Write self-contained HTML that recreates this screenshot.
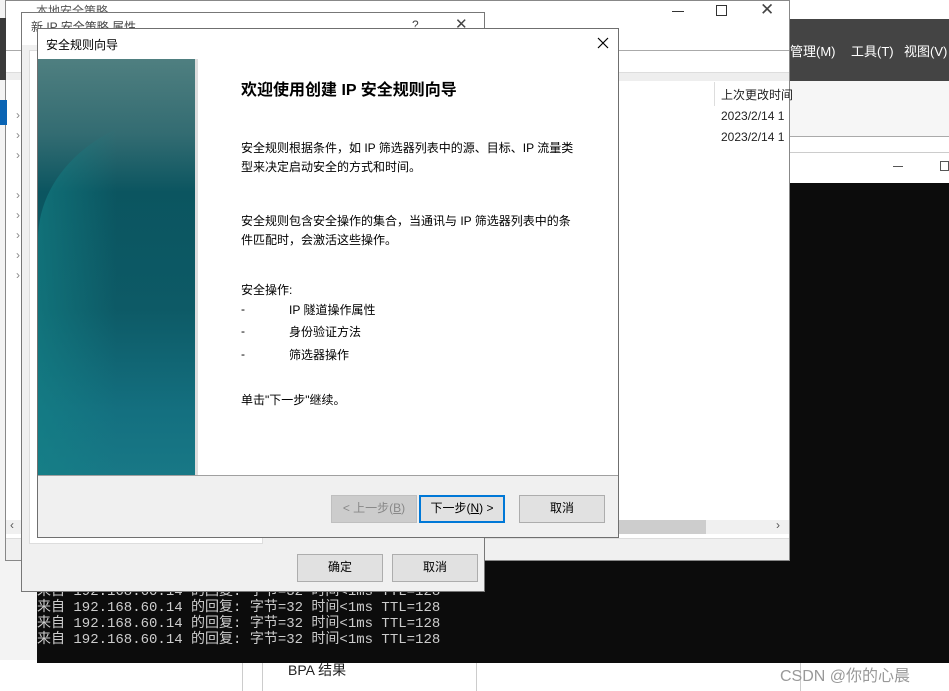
<!DOCTYPE html>
<html><head><meta charset="utf-8"><style>
*{margin:0;padding:0;box-sizing:border-box}
body{width:949px;height:691px;overflow:hidden;background:#f3f3f3;position:relative;font-family:"Liberation Sans","Noto Sans CJK SC",sans-serif;font-size:12px;color:#000}
.a{position:absolute}
.t{position:absolute;white-space:nowrap}
.btn{position:absolute;background:#e1e1e1;border:1px solid #adadad;text-align:center;font-size:12px;line-height:25px}
.con{font-family:"Liberation Mono","Noto Sans CJK SC",monospace;font-size:14px;color:#cccccc;line-height:16px}
</style></head><body>
<div class="a" style="left:0;top:660px;width:949px;height:31px;background:#fff"></div>
<div class="a" style="left:242px;top:660px;width:1px;height:31px;background:#ccc"></div>
<div class="a" style="left:262px;top:660px;width:1px;height:31px;background:#ccc"></div>
<div class="a" style="left:476px;top:660px;width:1px;height:31px;background:#ccc"></div>
<div class="a" style="left:800px;top:660px;width:1px;height:31px;background:#ccc"></div>
<div class="t" style="left:288px;top:660px;font-size:14px;color:#222">BPA 结果</div>
<div class="t" style="left:780px;top:662px;font-size:16px;color:#999">CSDN @你的心晨</div>

<div class="a" style="left:790px;top:0;width:159px;height:185px;background:#fff"></div>
<div class="a" style="left:790px;top:19px;width:159px;height:62px;background:#444"></div>
<div class="t" style="left:790px;top:41px;color:#fff;font-size:13px">管理(M)</div>
<div class="t" style="left:851px;top:41px;color:#fff;font-size:13px">工具(T)</div>
<div class="t" style="left:904px;top:41px;color:#fff;font-size:13px">视图(V)</div>
<div class="a" style="left:790px;top:81px;width:159px;height:56px;background:#f6f6f6;border-bottom:1px solid #aaa"></div>
<div class="a" style="left:790px;top:152px;width:159px;height:31px;background:#fff;border-top:1px solid #ccc"></div>
<div class="a" style="left:893px;top:166px;width:10px;height:1px;background:#555"></div>
<div class="a" style="left:940px;top:161px;width:9px;height:10px;border:1px solid #555"></div>

<div class="a" style="left:37px;top:183px;width:912px;height:480px;background:#0c0c0c"></div>
<div class="t con" style="left:37px;top:584px">来自 192.168.60.14 的回复: 字节=32 时间&lt;1ms TTL=128</div>
<div class="t con" style="left:37px;top:600px">来自 192.168.60.14 的回复: 字节=32 时间&lt;1ms TTL=128</div>
<div class="t con" style="left:37px;top:616px">来自 192.168.60.14 的回复: 字节=32 时间&lt;1ms TTL=128</div>
<div class="t con" style="left:37px;top:632px">来自 192.168.60.14 的回复: 字节=32 时间&lt;1ms TTL=128</div>

<div class="a" style="left:5px;top:0;width:785px;height:561px;background:#fff;border:1px solid #888"></div>
<div class="a" style="left:0;top:18px;width:6px;height:62px;background:#3a3a3a"></div>
<div class="t" style="left:36px;top:2px;color:#555;font-size:12px">本地安全策略</div>
<div class="a" style="left:672px;top:11px;width:12px;height:1px;background:#333"></div>
<div class="a" style="left:716px;top:5px;width:11px;height:11px;border:1px solid #333"></div>
<div class="t" style="left:760px;top:0px;font-size:17px;color:#444">✕</div>
<div class="a" style="left:6px;top:50px;width:783px;height:1px;background:#aaa"></div>
<div class="a" style="left:6px;top:72px;width:783px;height:1px;background:#ddd"></div>
<div class="a" style="left:6px;top:73px;width:783px;height:8px;background:#eee"></div>
<div class="a" style="left:6px;top:80px;width:16px;height:446px;background:#fff;border-right:1px solid #ddd"></div>
<div class="a" style="left:0;top:100px;width:7px;height:25px;background:#0a64b4"></div>
<div class="t" style="left:16px;top:108px;color:#888">›</div>
<div class="t" style="left:16px;top:128px;color:#888">›</div>
<div class="t" style="left:16px;top:148px;color:#888">›</div>
<div class="t" style="left:16px;top:188px;color:#888">›</div>
<div class="t" style="left:16px;top:208px;color:#888">›</div>
<div class="t" style="left:16px;top:228px;color:#888">›</div>
<div class="t" style="left:16px;top:248px;color:#888">›</div>
<div class="t" style="left:16px;top:268px;color:#888">›</div>
<div class="a" style="left:714px;top:82px;width:1px;height:24px;background:#ddd"></div>
<div class="t" style="left:721px;top:86px;color:#222">上次更改时间</div>
<div class="t" style="left:721px;top:109px;color:#222">2023/2/14 1</div>
<div class="t" style="left:721px;top:130px;color:#222">2023/2/14 1</div>
<div class="a" style="left:6px;top:520px;width:783px;height:14px;background:#f0f0f0"></div>
<div class="a" style="left:618px;top:520px;width:88px;height:14px;background:#cdcdcd"></div>
<div class="t" style="left:10px;top:518px;color:#555">‹</div>
<div class="t" style="left:776px;top:518px;color:#555">›</div>
<div class="a" style="left:6px;top:538px;width:783px;height:22px;background:#f0f0f0;border-top:1px solid #ddd"></div>

<div class="a" style="left:21px;top:12px;width:464px;height:580px;background:#f0f0f0;border:1px solid #777"></div>
<div class="a" style="left:22px;top:13px;width:462px;height:32px;background:#fff"></div>
<div class="t" style="left:31px;top:18px;color:#444">新 IP 安全策略 属性</div>
<div class="t" style="left:412px;top:18px;color:#444">?</div>
<div class="t" style="left:455px;top:15px;color:#444;font-size:15px">✕</div>
<div class="a" style="left:29px;top:50px;width:234px;height:494px;background:#fff;border:1px solid #ddd"></div>
<div class="btn" style="left:297px;top:554px;width:86px;height:28px">确定</div>
<div class="btn" style="left:392px;top:554px;width:86px;height:28px">取消</div>

<div class="a" style="left:37px;top:28px;width:582px;height:510px;background:#fff;border:1px solid #6f6f6f"></div>
<div class="t" style="left:46px;top:36px;font-size:12px">安全规则向导</div>
<svg class="a" style="left:597px;top:37px" width="12" height="12"><path d="M1 1L11 11M11 1L1 11" stroke="#000" stroke-width="1.2"/></svg>
<div class="a" style="left:38px;top:59px;width:157px;height:416px;background:linear-gradient(180deg,#4f7f80 0%,#336c72 18%,#0b5560 32%,#0d5a66 60%,#147080 85%,#187886 100%)"></div>
<div class="a" style="left:38px;top:112px;width:157px;height:363px;border-radius:100% 0 0 0/35% 0 0 0;background:linear-gradient(90deg,rgba(20,130,135,.6),rgba(0,0,0,0) 50%)"></div>
<div class="a" style="left:195px;top:59px;width:3px;height:416px;background:#ddd"></div>
<div class="t" style="left:241px;top:76px;font-size:16px;font-weight:bold">欢迎使用创建 IP 安全规则向导</div>
<div class="t" style="left:241px;top:139px;line-height:19px">安全规则根据条件，如 IP 筛选器列表中的源、目标、IP 流量类<br>型来决定启动安全的方式和时间。</div>
<div class="t" style="left:241px;top:212px;line-height:19px">安全规则包含安全操作的集合，当通讯与 IP 筛选器列表中的条<br>件匹配时，会激活这些操作。</div>
<div class="t" style="left:241px;top:281px">安全操作:</div>
<div class="t" style="left:241px;top:302px">-</div><div class="t" style="left:289px;top:301px">IP 隧道操作属性</div>
<div class="t" style="left:241px;top:324px">-</div><div class="t" style="left:289px;top:323px">身份验证方法</div>
<div class="t" style="left:241px;top:347px">-</div><div class="t" style="left:289px;top:346px">筛选器操作</div>
<div class="t" style="left:241px;top:391px">单击"下一步"继续。</div>
<div class="a" style="left:38px;top:475px;width:580px;height:62px;background:#f0f0f0;border-top:1px solid #a0a0a0"></div>
<div class="btn" style="left:331px;top:495px;width:86px;height:28px;background:#ccc;border-color:#bfbfbf;color:#888">&lt; 上一步(<u>B</u>)</div>
<div class="btn" style="left:419px;top:495px;width:86px;height:28px;border:2px solid #0078d7;line-height:23px">下一步(<u>N</u>) &gt;</div>
<div class="btn" style="left:519px;top:495px;width:86px;height:28px">取消</div>
</body></html>
